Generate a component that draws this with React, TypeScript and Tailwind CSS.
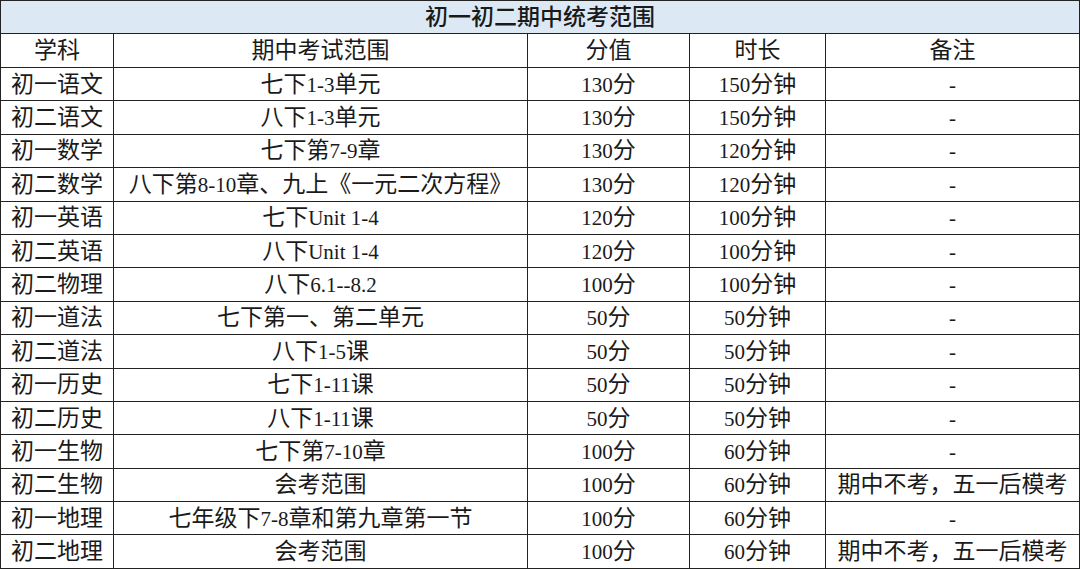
import React from 'react';

const rows = [
  ['初一语文', '七下1-3单元', '130分', '150分钟', '-'],
  ['初二语文', '八下1-3单元', '130分', '150分钟', '-'],
  ['初一数学', '七下第7-9章', '130分', '120分钟', '-'],
  ['初二数学', '八下第8-10章、九上《一元二次方程》', '130分', '120分钟', '-'],
  ['初一英语', '七下Unit 1-4', '120分', '100分钟', '-'],
  ['初二英语', '八下Unit 1-4', '120分', '100分钟', '-'],
  ['初二物理', '八下6.1--8.2', '100分', '100分钟', '-'],
  ['初一道法', '七下第一、第二单元', '50分', '50分钟', '-'],
  ['初二道法', '八下1-5课', '50分', '50分钟', '-'],
  ['初一历史', '七下1-11课', '50分', '50分钟', '-'],
  ['初二历史', '八下1-11课', '50分', '50分钟', '-'],
  ['初一生物', '七下第7-10章', '100分', '60分钟', '-'],
  ['初二生物', '会考范围', '100分', '60分钟', '期中不考，五一后模考'],
  ['初一地理', '七年级下7-8章和第九章第一节', '100分', '60分钟', '-'],
  ['初二地理', '会考范围', '100分', '60分钟', '期中不考，五一后模考'],
];

const headers = ['学科', '期中考试范围', '分值', '时长', '备注'];

const cell = 'border border-[#222] text-center p-0 leading-none';

// latin runs a touch smaller than the CJK glyphs, as in the source sheet
function Mixed({ text }: { text: string }) {
  const parts = text.match(/[A-Za-z0-9.\- ]+|[^A-Za-z0-9.\- ]+/g) || [];
  return (
    <>
      {parts.map((p, i) =>
        /^[A-Za-z0-9.\- ]+$/.test(p) ? (
          <span key={i} className="text-[21px]">{p}</span>
        ) : (
          <span key={i}>{p}</span>
        )
      )}
    </>
  );
}

export default function App() {
  return (
    <div className="w-[1080px] h-[569px] bg-white text-[#1a1a1a] font-['Liberation_Serif','Noto_Sans_CJK_SC',serif] text-[23px]">
      <table className="table-fixed border-collapse w-[1079px]">
        <colgroup>
          <col className="w-[113px]" />
          <col className="w-[414px]" />
          <col className="w-[162px]" />
          <col className="w-[136px]" />
          <col className="w-[254px]" />
        </colgroup>
        <tbody>
          <tr className="h-[33px]">
            <td colSpan={5} className={`${cell} bg-[#dce9f5] font-medium`}>
              初一初二期中统考范围
            </td>
          </tr>
          <tr className="h-[34px]">
            {headers.map((h) => (
              <td key={h} className={cell}>{h}</td>
            ))}
          </tr>
          {rows.map((r) => (
            <tr key={r[0]} className="h-[33.4px]">
              {r.map((c, i) => (
                <td key={i} className={cell}>
                  <Mixed text={c} />
                </td>
              ))}
            </tr>
          ))}
        </tbody>
      </table>
    </div>
  );
}
